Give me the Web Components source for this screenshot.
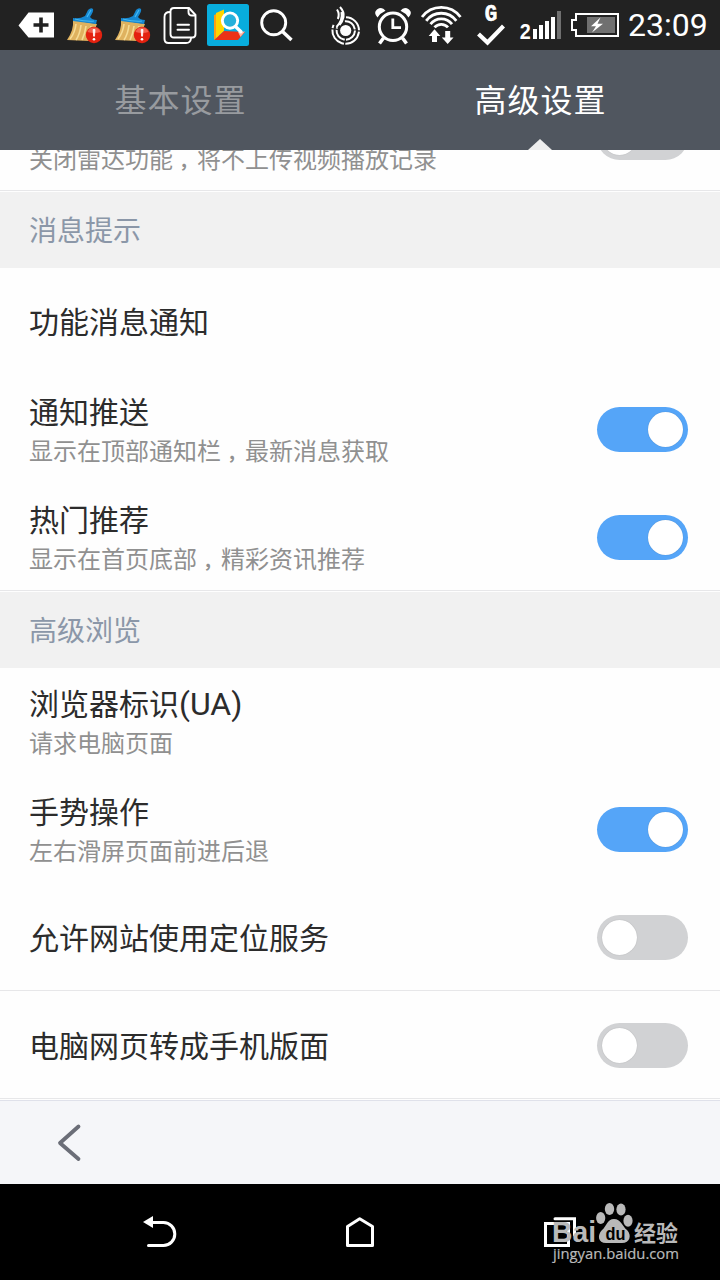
<!DOCTYPE html>
<html lang="zh-CN">
<head>
<meta charset="utf-8">
<title>高级设置</title>
<style>
  html,body{ margin:0; padding:0; background:#000; }
  body{
    font-family:Roboto,"Noto Sans CJK SC",sans-serif;
    width:720px; height:1280px; overflow:hidden;
  }
</style>
</head>
<body>
<settings-app></settings-app>

<script>
(function () {
  // Every glyph is [x, width, markup]; y runs over the height of its bar
  const BROOM = `
    <path d="M73 20 L97 24 Q94 33 89 41 L67 40 Q74 30 73 20Z" fill="#dfb25f"/>
    <path d="M76 24 Q75 33 70 39 M81 25 Q80 34 76 40 M86 26 Q85 34 82 40 M91 26 Q90 33 87 39" fill="none" stroke="#f6dc96" stroke-width="1.6"/>
    <path d="M73 18 Q80 19 85 16 L88 10 Q91 7 93 9 Q94 11 90 17 Q92 20 97 20 L96 24 L73 21Z" fill="#1688d2"/>
    <path d="M75 19 Q87 22 94 21 M91 10 L87 17" fill="none" stroke="#45b9f2" stroke-width="1.2"/>
    <circle cx="94" cy="35" r="8.2" fill="#e4210f"/>
    <path d="M87.5 32 a7 7 0 0 1 13 0 q-6 2 -13 0" fill="#f3604e"/>
    <path d="M93.1 29.5 h1.9 l-.5 6.7 h-.9z" fill="#fff" stroke="#fff" stroke-width=".8"/><circle cx="94" cy="39.2" r="1.3" fill="#fff"/>`;

  const STATUS = {
    clear: [12, 48, `<path d="M18.5 25.5 L28.5 12.4 H54 V37.6 H28.5Z" fill="#fff"/><path d="M41 17.5 V32.5 M33.5 25 H48.5" stroke="#222" stroke-width="3.6"/>`],
    broom: [60, 48, BROOM],
    docs: [156, 48, `<g fill="none" stroke="#fff" stroke-width="1.9" stroke-linejoin="round" stroke-linecap="round">
      <path d="M189 8 H174 Q170.5 8 170.5 11.5 V34 Q170.5 37.5 174 37.5 H192.5 Q195.5 37.5 195.5 34 V15Z"/>
      <path d="M188.5 8.5 V12 Q188.5 15.5 192 15.5 H195"/>
      <path d="M170 12 Q164.5 12 164.5 17 V39 Q164.5 43 168.5 43 H186 Q190.5 43 191 38.5"/>
      <path d="M177.5 24.7 H189 M177.5 29.8 H189"/></g>`],
    finder: [204, 48, `<rect x="207" y="4" width="42" height="42" rx="2.5" fill="#08addd"/>
      <path d="M214 15 L219 13 V36 L214 40Z" fill="#ff9e14"/><path d="M216 13 L224 9.5 V31 L216 38Z" fill="#ffd500"/>
      <path d="M224 31 L245 32 L238 40 H214.5Z" fill="#ec3216"/><path d="M238 32 L245 31.5 L240.5 37Z" fill="#ffb5a5"/>
      <circle cx="230" cy="20.6" r="7.7" fill="#26b1db" stroke="#fff" stroke-width="2.9"/>
      <path d="M235.5 26.5 L241 31.7" stroke="#fff" stroke-width="3.4" stroke-linecap="round"/>`],
    search: [252, 48, `<g fill="none" stroke="#fff" stroke-width="2.9"><circle cx="273.7" cy="22.7" r="12"/><path d="M282 31 L291.5 40" stroke-width="3.5"/></g>`],
    radar: [322, 46, `<circle cx="345.7" cy="30.5" r="5.6" fill="#fff"/>
      <g fill="none" stroke="#fff" stroke-width="2">
      <path d="M344.9 21.3 A9.2 9.2 0 1 1 337.1 27.3" stroke-dasharray="14 1.2"/>
      <path d="M346 17.2 A13.3 13.3 0 1 1 333.6 24.9" stroke-dasharray="20 1.4"/>
      <path d="M336.5 27 Q343 20 341.5 12 M337.8 19 Q340 14 337 9.5 M340 7 Q344.5 12 343.5 17 Q342.5 22 339.5 25"/></g>`],
    alarm: [368, 48, `<g fill="none" stroke="#fff" stroke-width="3"><circle cx="393" cy="26.8" r="13.7"/><path d="M392.8 18.5 V27.7 H401" stroke-width="2.8"/>
      <path d="M383.5 38 L379.5 43.5 M402.5 38 L406.5 43.5" stroke-width="3.5"/></g>
      <path d="M377.5 17.5 Q373 12.5 377 9.5 Q382 6 385.5 10.8 Q380.5 13 377.5 17.5Z M408.5 17.5 Q413 12.5 409 9.5 Q404 6 400.5 10.8 Q405.5 13 408.5 17.5Z" fill="#fff"/>`],
    wifi: [416, 50, `<g fill="none" stroke="#fff" stroke-width="2.8">
      <path d="M422 17 A24 24 0 0 1 460.5 17 M426.2 20.8 A18.8 18.8 0 0 1 456.3 20.8 M430.5 24.2 A13.6 13.6 0 0 1 452 24.2 M434.5 27.4 A9 9 0 0 1 448 27.4"/></g>
      <path d="M434.5 29.3 L440.3 36 H437 V42 H432 V36 H428.7Z M447.7 44 L453.5 37.5 H450.2 V31 H445.2 V37.5 H441.8Z" fill="#fff"/>`],
    check: [466, 48, `<text x="484.7" y="20.5" font-family="Liberation Mono" font-weight="700" font-size="23" textLength="12.5" lengthAdjust="spacingAndGlyphs" fill="#fff" stroke="#fff" stroke-width=".6">G</text>
      <path d="M478.5 34 L487.5 42.5 L503.5 26" fill="none" stroke="#fff" stroke-width="4.2"/>`],
    signal: [514, 52, `<text x="519.8" y="39" font-family="Liberation Sans" font-weight="700" font-size="21.5" textLength="11" lengthAdjust="spacingAndGlyphs" fill="#fff">2</text>
      <path d="M533 29h4v10h-4z M539 25h4v14h-4z M545 21h4v18h-4z M551 17h4v22h-4z" fill="#fff"/><path d="M557 11h4v28h-4z" fill="#707070"/>`],
    battery: [566, 58, `<path d="M576 14 H618 V36 H576 V30 H572 V20 H576Z" fill="none" stroke="#fff" stroke-width="2"/>
      <path d="M587 17h28v16h-28z" fill="#707070"/><path d="M600.5 17.5 L591 26.2 H596 L592 32.5 L603 23.8 H597.5Z" fill="#fff"/>`]
  };

  // Define a simple element whose shadow root is cloned from a template
  function make(name, html, setup) {
    const tpl = document.createElement('template');
    tpl.innerHTML = html;
    customElements.define(name, class extends HTMLElement {
      constructor(){
        super();
        this.attachShadow({ mode: 'open' }).appendChild(tpl.content.cloneNode(true));
      }
      connectedCallback(){ if (setup) setup.call(this, this.shadowRoot); }
    });
  }

  make('status-icon', `
    <style>:host{ display:block; flex:none; height:50px; } svg{ display:block; }</style>
    <svg height="50"></svg>`,
    function (root) {
      const [x, w, art] = STATUS[this.getAttribute('name')];
      const svg = root.querySelector('svg');
      svg.setAttribute('width', w);
      svg.setAttribute('viewBox', `${x} 0 ${w} 50`);
      svg.innerHTML = art;
    });

  make('status-bar', `
    <style>
      :host{ display:flex; align-items:center; height:50px; padding:0 12px; background:#222; color:#fff; }
      .gap{ flex:1; }
      time{ width:80px; margin-left:4px; font-size:32px; line-height:50px; white-space:nowrap; }
    </style>
    <status-icon name="clear"></status-icon>
    <status-icon name="broom"></status-icon>
    <status-icon name="broom"></status-icon>
    <status-icon name="docs"></status-icon>
    <status-icon name="finder"></status-icon>
    <status-icon name="search"></status-icon>
    <div class="gap"></div>
    <status-icon name="radar"></status-icon>
    <status-icon name="alarm"></status-icon>
    <status-icon name="wifi"></status-icon>
    <status-icon name="check"></status-icon>
    <status-icon name="signal"></status-icon>
    <status-icon name="battery"></status-icon>
    <time>23:09</time>`);

  make('tab-item', `
    <style>
      :host{
        flex:1; display:flex; flex-direction:column; align-items:center;
        height:100px; color:#989b9f; font-size:32px; letter-spacing:1px;
      }
      :host([active]){ color:#fff; }
      .label{ flex:none; height:100px; padding-left:1px; line-height:103px; }
      .mark{ display:none; flex:none; width:24px; height:11px; margin-top:-11px; background:#eee; clip-path:polygon(50% 0,100% 100%,0 100%); }
      :host([active]) .mark{ display:block; }
    </style>
    <div class="label"><slot></slot></div>
    <div class="mark"></div>`);

  make('tab-bar', `
    <style>:host{ display:flex; height:100px; background:#50565f; }</style>
    <slot></slot>`);

  make('toggle-switch', `
    <style>
      :host{ display:flex; flex:none; box-sizing:border-box; width:91px; height:45px; padding:5px; border-radius:23px; background:#d1d2d4; }
      :host([on]){ background:#55a5f8; justify-content:flex-end; }
      i{ display:block; width:35px; height:35px; border-radius:50%; background:#fff; box-shadow:0 0 1px rgba(0,0,0,.25); }
    </style>
    <i></i>`);

  make('section-title', `
    <style>:host{ display:block; height:76px; line-height:80px; padding-left:29px; background:#f1f1f1; color:#8b97a8; font-size:28px; }</style>
    <slot></slot>`);

  make('setting-row', `
    <style>
      :host{ display:flex; align-items:center; box-sizing:border-box; height:108px; padding:0 32px 0 29px; color:#2c2c2c; }
      :host([line]){ background:linear-gradient(#e7e7e9,#e7e7e9) 0 106px / 100% 1px no-repeat; }
      .text{ flex:1; padding-top:2px; }
      .control{ margin-bottom:1px; }
      .title{ font-size:30px; line-height:40px; }
      .desc{ font-size:24px; line-height:38px; margin-bottom:-2px; color:#909090; }
      .comma{ padding-left:6px; font-size:18px; font-weight:700; line-height:1; }
      .desc:empty{ display:none; }
    </style>
    <div class="text"><div class="title"><slot></slot></div><div class="desc"></div></div>
    <div class="control"></div>`,
    function (root) {
      root.querySelector('.desc').innerHTML =
        (this.getAttribute('desc') || '').replace('，', '<span class="comma">，</span>');
      const state = this.getAttribute('toggle');
      if (state) root.querySelector('.control').innerHTML = `<toggle-switch ${state}></toggle-switch>`;
    });

  make('tool-bar', `
    <style>
      :host{ display:flex; align-items:center; box-sizing:border-box; height:84px; padding-left:56px; border-top:1px solid #dfe1ea; background:#f5f6f9; }
    </style>
    <svg width="28" height="40" viewBox="0 0 28 40"><path d="M22.5 3.5 L4 20 L22.5 36" fill="none" stroke="#6b6e78" stroke-width="3.8" stroke-linecap="round" stroke-linejoin="round"/></svg>`);

  make('nav-bar', `
    <style>
      :host{ display:flex; justify-content:center; height:96px; background:#000; }
      svg{ display:block; width:200px; height:96px; fill:none; stroke:#fff; stroke-width:3; stroke-linejoin:round; stroke-linecap:round; }
    </style>
    <svg viewBox="60 1184 200 96"><path d="M152 1222.5 H163.5 A11.3 11.5 0 0 1 163.5 1245.5 H148.5"/><path d="M143 1222 L153 1216 V1228Z" fill="#fff" stroke="none"/></svg>
    <svg viewBox="260 1184 200 96"><path d="M347.5 1245.5 V1226.5 L359.7 1218.8 L372.5 1226.5 V1245.5Z"/></svg>
    <svg viewBox="460 1184 200 96"><path d="M545.5 1223.5 H568.5 V1245.5 H545.5Z M555 1218.7 H574.5 V1235" stroke-linejoin="miter"/></svg>`);

  make('site-mark', `
    <style>:host{ position:absolute; right:36px; bottom:10px; width:134px; height:70px; } svg{ display:block; }</style>
    <svg width="134" height="70" viewBox="550 1200 134 70" fill="#b9b9b9">
      <text x="552" y="1242" font-family="Liberation Sans" font-weight="700" font-size="29" textLength="44" lengthAdjust="spacingAndGlyphs">Bai</text>
      <ellipse cx="600.7" cy="1218" rx="4.6" ry="6"/><ellipse cx="609.5" cy="1209" rx="4.7" ry="6"/>
      <ellipse cx="621" cy="1209.5" rx="4.6" ry="6"/><ellipse cx="628" cy="1220.7" rx="4.6" ry="6"/>
      <path d="M614 1219 C621 1219 622 1226 627 1230 C632 1235 630 1243 622 1243 H606 C598 1243 597 1235 602 1230 C607 1226 607 1219 614 1219Z"/>
      <text x="605.5" y="1239.5" font-family="Liberation Sans" font-weight="700" font-size="19" textLength="20" lengthAdjust="spacingAndGlyphs" fill="#000">du</text>
      <text x="634" y="1240.5" font-family="Noto Sans CJK SC" font-weight="700" font-size="22">经验</text>
      <text x="553" y="1259" font-family="Open Sans, Noto Sans" font-size="15" textLength="126" lengthAdjust="spacingAndGlyphs" stroke="#b9b9b9" stroke-width=".2">jingyan.baidu.com</text>
    </svg>`);

  make('settings-app', `
    <style>
      :host{ display:flex; flex-direction:column; position:relative; width:720px; height:1280px; overflow:hidden; }
      main{ display:flex; flex-direction:column; justify-content:flex-end; height:950px; overflow:hidden; background:#fefefe; }
      main > *{ flex:none; }
      .latin{ font-size:32px; line-height:1; }
    </style>
    <status-bar></status-bar>
    <tab-bar><tab-item>基本设置</tab-item><tab-item active>高级设置</tab-item></tab-bar>
    <main>
      <setting-row line toggle="off" desc="关闭雷达功能，将不上传视频播放记录">&nbsp;</setting-row>
      <section-title>消息提示</section-title>
      <setting-row>功能消息通知</setting-row>
      <setting-row toggle="on" desc="显示在顶部通知栏，最新消息获取">通知推送</setting-row>
      <setting-row line toggle="on" desc="显示在首页底部，精彩资讯推荐">热门推荐</setting-row>
      <section-title>高级浏览</section-title>
      <setting-row desc="请求电脑页面">浏览器标识<span class="latin">(UA)</span></setting-row>
      <setting-row toggle="on" desc="左右滑屏页面前进后退">手势操作</setting-row>
      <setting-row line toggle="off">允许网站使用定位服务</setting-row>
      <setting-row line toggle="off">电脑网页转成手机版面</setting-row>
    </main>
    <tool-bar></tool-bar>
    <nav-bar></nav-bar>
    <site-mark></site-mark>`);
})();
</script>
</body>
</html>
